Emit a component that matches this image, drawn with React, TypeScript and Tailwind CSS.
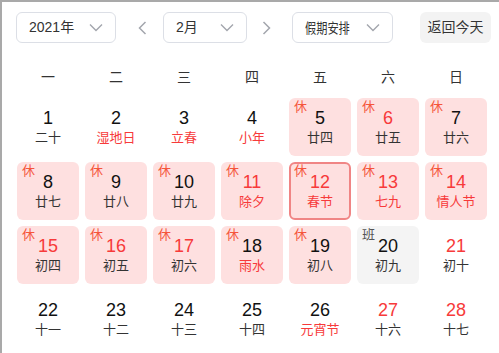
import React from 'react';

type Day = {
  d: number;
  lunar: string;
  mark?: '休' | '班';
  numRed?: boolean;
  lunarRed?: boolean;
  selected?: boolean;
};

const days: Day[] = [
  { d: 1, lunar: '二十' },
  { d: 2, lunar: '湿地日', lunarRed: true },
  { d: 3, lunar: '立春', lunarRed: true },
  { d: 4, lunar: '小年', lunarRed: true },
  { d: 5, lunar: '廿四', mark: '休' },
  { d: 6, lunar: '廿五', mark: '休', numRed: true },
  { d: 7, lunar: '廿六', mark: '休' },
  { d: 8, lunar: '廿七', mark: '休' },
  { d: 9, lunar: '廿八', mark: '休' },
  { d: 10, lunar: '廿九', mark: '休' },
  { d: 11, lunar: '除夕', mark: '休', numRed: true, lunarRed: true },
  { d: 12, lunar: '春节', mark: '休', numRed: true, lunarRed: true, selected: true },
  { d: 13, lunar: '七九', mark: '休', numRed: true, lunarRed: true },
  { d: 14, lunar: '情人节', mark: '休', numRed: true, lunarRed: true },
  { d: 15, lunar: '初四', mark: '休', numRed: true },
  { d: 16, lunar: '初五', mark: '休', numRed: true },
  { d: 17, lunar: '初六', mark: '休', numRed: true },
  { d: 18, lunar: '雨水', mark: '休', lunarRed: true },
  { d: 19, lunar: '初八', mark: '休' },
  { d: 20, lunar: '初九', mark: '班' },
  { d: 21, lunar: '初十', numRed: true },
  { d: 22, lunar: '十一' },
  { d: 23, lunar: '十二' },
  { d: 24, lunar: '十三' },
  { d: 25, lunar: '十四' },
  { d: 26, lunar: '元宵节', lunarRed: true },
  { d: 27, lunar: '十六', numRed: true },
  { d: 28, lunar: '十七', numRed: true },
];

const weekdays = ['一', '二', '三', '四', '五', '六', '日'];

const ChevronDown = () => (
  <svg width="14" height="9" viewBox="0 0 14 9" fill="none">
    <polyline points="1,1.5 7,7.5 13,1.5" stroke="#a3a6ad" strokeWidth="1.4" />
  </svg>
);

const Arrow = ({ dir }: { dir: 'left' | 'right' }) => (
  <svg width="9" height="14" viewBox="0 0 9 14" fill="none">
    <polyline
      points={dir === 'left' ? '7.5,1 1.5,7 7.5,13' : '1.5,1 7.5,7 1.5,13'}
      stroke="#a3a6ad"
      strokeWidth="1.5"
    />
  </svg>
);

const Select = ({ label, width, narrow }: { label: string; width: string; narrow?: boolean }) => (
  <div className={`${width} h-[31px] flex items-center justify-between pl-[12px] pr-[12px] border border-[#dcdfe6] rounded-[6px] bg-white`}>
    {narrow ? (
      <span className="w-[45px] overflow-visible">
        <span className="inline-block whitespace-nowrap text-[14px] text-[#333] scale-x-[0.8] origin-left">{label}</span>
      </span>
    ) : (
      <span className="text-[14px] text-[#333]">{label}</span>
    )}
    <ChevronDown />
  </div>
);

const DayCell = ({ day }: { day: Day }) => {
  let bg = '';
  if (day.mark === '休') bg = 'bg-[#fee0e0]';
  if (day.mark === '班') bg = 'bg-[#f4f4f4]';
  const border = day.selected ? 'border-2 border-[#f08585]' : '';
  return (
    <div className={`relative m-[3px] h-[58px] rounded-[6px] flex flex-col items-center ${day.selected ? 'pt-[7px]' : 'pt-[9px]'} ${bg} ${border}`}>
      {day.mark && (
        <span
          className={`absolute ${day.selected ? 'top-[0px] left-[3px]' : 'top-[2px] left-[5px]'} text-[13px] leading-[14px] ${
            day.mark === '休' ? 'text-[#f5553b]' : 'text-[#555]'
          }`}
        >
          {day.mark}
        </span>
      )}
      <span className={`text-[18px] leading-[22px] ${day.numRed ? 'text-[#f73a3a]' : 'text-[#111]'}`}>{day.d}</span>
      <span className={`mt-[1px] text-[13px] leading-[16px] ${day.lunarRed ? 'text-[#f73a3a]' : 'text-[#333]'}`}>
        {day.lunar}
      </span>
    </div>
  );
};

export default function App() {
  return (
    <div
      className="w-[499px] h-[353px] overflow-hidden bg-white border-l-2 border-t-2 border-[#a9a9a9] pl-[12px]"
      style={{ fontFamily: '"Liberation Sans", "Noto Sans CJK SC", sans-serif' }}
    >
      <div className="flex items-center mt-[10px] ml-[2px]">
        <Select label="2021年" width="w-[100px]" />
        <div className="ml-[22px] flex items-center">
          <Arrow dir="left" />
        </div>
        <div className="ml-[16px]">
          <Select label="2月" width="w-[84px]" />
        </div>
        <div className="ml-[15px] flex items-center">
          <Arrow dir="right" />
        </div>
        <div className="ml-[21px]">
          <Select label="假期安排" width="w-[101px]" narrow />
        </div>
        <div className="ml-[27px] w-[71px] h-[31px] rounded-[6px] bg-[#f3f3f3] flex items-center justify-center text-[14px] text-[#333]">
          返回今天
        </div>
      </div>

      <div className="grid grid-cols-[repeat(7,68px)] mt-[24px] h-[20px] mb-[8px]">
        {weekdays.map((w) => (
          <div key={w} className="flex items-center justify-center text-[14px] text-[#333]">
            {w}
          </div>
        ))}
      </div>

      <div className="grid grid-cols-[repeat(7,68px)]">
        {days.map((day) => (
          <DayCell key={day.d} day={day} />
        ))}
      </div>
    </div>
  );
}
